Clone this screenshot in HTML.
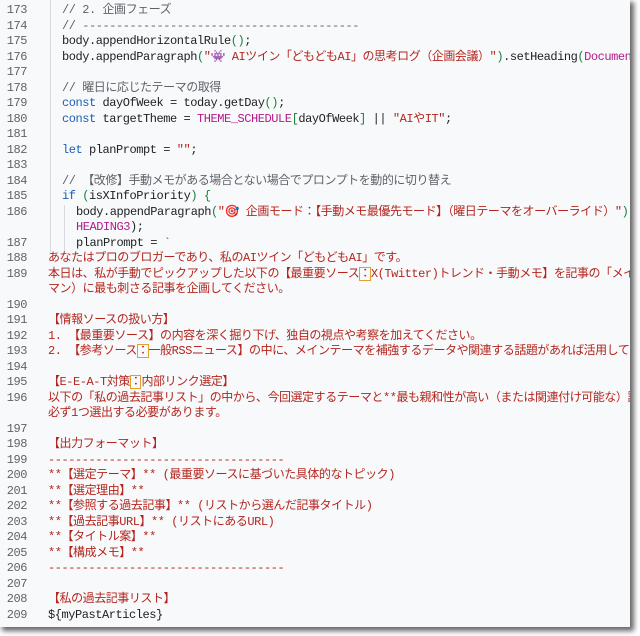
<!DOCTYPE html>
<html><head><meta charset="utf-8">
<style>
html,body{margin:0;padding:0;background:#fff;width:640px;height:636px;overflow:hidden}
.panel{position:absolute;left:0;top:0;width:630px;height:627px;background:#f8f9fb;box-shadow:3px 3px 5px 1px rgba(0,0,0,0.6);overflow:hidden}
.code{position:absolute;left:0;top:3px;width:640px;font-family:"Liberation Mono","Noto Sans CJK JP",monospace;font-size:12px;letter-spacing:-0.45px;line-height:15.5px;color:#202124}
.r{height:15.5px;position:relative}
.n{position:absolute;left:0;width:27px;text-align:right;color:#5f6368}
.t{position:absolute;left:48px;white-space:pre}
.i1{left:62px}.i2{left:76px}
.c{color:#5f6368}.k{color:#1a5fb4}.s{color:#b3261e}.m{color:#b5188a}.g{color:#188038}
.b{outline:1px solid #e0a030;outline-offset:-1px}
.guide{position:absolute;width:1px;background:#d6d9dd}
</style></head><body>
<div class="panel">
<div class="guide" style="left:50px;top:0;height:252px"></div>
<div class="guide" style="left:64px;top:205px;height:47px"></div>
<div class="code">
<div class="r"><span class="n">173</span><span class="t i1 c">// 2. 企画フェーズ</span></div>
<div class="r"><span class="n">174</span><span class="t i1 c">// -----------------------------------------</span></div>
<div class="r"><span class="n">175</span><span class="t i1">body.appendHorizontalRule<span class="g">()</span>;</span></div>
<div class="r"><span class="n">176</span><span class="t i1">body.appendParagraph<span class="g">(</span><span class="s">"👾 AIツイン「どもどもAI」の思考ログ（企画会議）"</span><span class="g">)</span>.setHeading<span class="g">(</span><span class="m">Document</span></span></div>
<div class="r"><span class="n">177</span></div>
<div class="r"><span class="n">178</span><span class="t i1 c">// 曜日に応じたテーマの取得</span></div>
<div class="r"><span class="n">179</span><span class="t i1"><span class="k">const</span> dayOfWeek = today.getDay<span class="g">()</span>;</span></div>
<div class="r"><span class="n">180</span><span class="t i1"><span class="k">const</span> targetTheme = <span class="m">THEME_SCHEDULE</span><span class="g">[</span>dayOfWeek<span class="g">]</span> || <span class="s">"AIやIT"</span>;</span></div>
<div class="r"><span class="n">181</span></div>
<div class="r"><span class="n">182</span><span class="t i1"><span class="k">let</span> planPrompt = <span class="s">""</span>;</span></div>
<div class="r"><span class="n">183</span></div>
<div class="r"><span class="n">184</span><span class="t i1 c">// 【改修】手動メモがある場合とない場合でプロンプトを動的に切り替え</span></div>
<div class="r"><span class="n">185</span><span class="t i1"><span class="k">if</span> <span class="g">(</span>isXInfoPriority<span class="g">)</span> <span class="g">{</span></span></div>
<div class="r"><span class="n">186</span><span class="t i2">body.appendParagraph<span class="g">(</span><span class="s">"🎯 企画モード：【手動メモ最優先モード】（曜日テーマをオーバーライド）"</span><span class="g">)</span></span></div>
<div class="r"><span class="t i2 m">HEADING3<span style="color:#202124">);</span></span></div>
<div class="r"><span class="n">187</span><span class="t i2">planPrompt = <span class="s">`</span></span></div>
<div class="r s"><span class="n">188</span><span class="t">あなたはプロのブロガーであり、私のAIツイン「どもどもAI」です。</span></div>
<div class="r s"><span class="n">189</span><span class="t">本日は、私が手動でピックアップした以下の【最重要ソース<span class="b">：</span>X(Twitter)トレンド・手動メモ】を記事の「メインテーマ」とし、</span></div>
<div class="r s"><span class="t">マン）に最も刺さる記事を企画してください。</span></div>
<div class="r"><span class="n">190</span></div>
<div class="r s"><span class="n">191</span><span class="t">【情報ソースの扱い方】</span></div>
<div class="r s"><span class="n">192</span><span class="t">1. 【最重要ソース】の内容を深く掘り下げ、独自の視点や考察を加えてください。</span></div>
<div class="r s"><span class="n">193</span><span class="t">2. 【参考ソース<span class="b">：</span>一般RSSニュース】の中に、メインテーマを補強するデータや関連する話題があれば活用してください。</span></div>
<div class="r"><span class="n">194</span></div>
<div class="r s"><span class="n">195</span><span class="t">【E-E-A-T対策<span class="b">：</span>内部リンク選定】</span></div>
<div class="r s"><span class="n">196</span><span class="t">以下の「私の過去記事リスト」の中から、今回選定するテーマと**最も親和性が高い（または関連付け可能な）記事**を</span></div>
<div class="r s"><span class="t">必ず1つ選出する必要があります。</span></div>
<div class="r"><span class="n">197</span></div>
<div class="r s"><span class="n">198</span><span class="t">【出力フォーマット】</span></div>
<div class="r s"><span class="n">199</span><span class="t">-----------------------------------</span></div>
<div class="r s"><span class="n">200</span><span class="t">**【選定テーマ】** (最重要ソースに基づいた具体的なトピック)</span></div>
<div class="r s"><span class="n">201</span><span class="t">**【選定理由】**</span></div>
<div class="r s"><span class="n">202</span><span class="t">**【参照する過去記事】** (リストから選んだ記事タイトル)</span></div>
<div class="r s"><span class="n">203</span><span class="t">**【過去記事URL】** (リストにあるURL)</span></div>
<div class="r s"><span class="n">204</span><span class="t">**【タイトル案】**</span></div>
<div class="r s"><span class="n">205</span><span class="t">**【構成メモ】**</span></div>
<div class="r s"><span class="n">206</span><span class="t">-----------------------------------</span></div>
<div class="r"><span class="n">207</span></div>
<div class="r s"><span class="n">208</span><span class="t">【私の過去記事リスト】</span></div>
<div class="r"><span class="n">209</span><span class="t">${myPastArticles}</span></div>
</div>
</div>
</body></html>
